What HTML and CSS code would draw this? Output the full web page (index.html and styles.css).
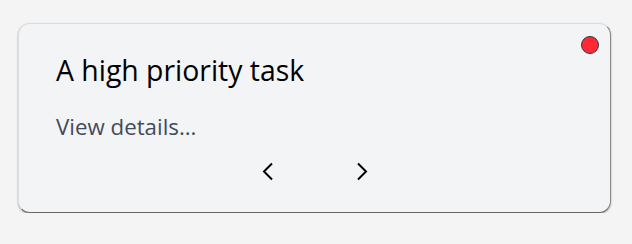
FILE: index.html
```html
<!DOCTYPE html>
<html lang="en">
<head>
<meta charset="utf-8">
<link rel="stylesheet" href="styles.css">
</head>
<body>
<div class="card">
  <span class="dot"></span>
  <h2 class="title">A high priority task</h2>
  <a class="details">View details...</a>
  <div class="nav">
    <button class="chev" aria-label="Previous">
      <svg width="11" height="19" viewBox="0 0 11 19"><polyline points="10,1.5 2,9.5 10,17.5" fill="none" stroke="#000" stroke-width="2"/></svg>
    </button>
    <button class="chev" aria-label="Next">
      <svg width="11" height="19" viewBox="0 0 11 19"><polyline points="1,1.5 9,9.5 1,17.5" fill="none" stroke="#000" stroke-width="2"/></svg>
    </button>
  </div>
</div>
</body>
</html>
```
FILE: styles.css
```css
html, body {
  margin: 0;
  background: #f4f4f4;
}
body {
  padding: 23px 21px 0 18px;
  font-family: "Open Sans", "Noto Sans", sans-serif;
}
.card {
  position: relative;
  box-sizing: border-box;
  width: 593px;
  height: 190px;
  background: #f3f4f6;
  border: 1px solid #dcdcdc;
  border-right-color: #888;
  border-bottom-color: #666;
  border-radius: 12px;
  box-shadow: 0 1px 2px rgba(0,0,0,0.35);
  padding: 28px 36px 0 37px;
}
.dot {
  position: absolute;
  top: 12px;
  right: 11px;
  width: 16px;
  height: 16px;
  border-radius: 50%;
  background: #ff2837;
  border: 1px solid #333844;
}
.title {
  margin: 0;
  font-weight: 400;
  font-size: 28.4px;
  line-height: 36px;
  color: #000;
}
.details {
  display: block;
  margin-top: 24px;
  font-size: 22.3px;
  line-height: 30px;
  color: #434b58;
}
.nav {
  display: flex;
  justify-content: center;
  gap: 84px;
  margin-top: 20px;
}
.chev {
  padding: 0;
  border: 0;
  background: none;
  display: flex;
  width: 11px;
  height: 19px;
}
```
